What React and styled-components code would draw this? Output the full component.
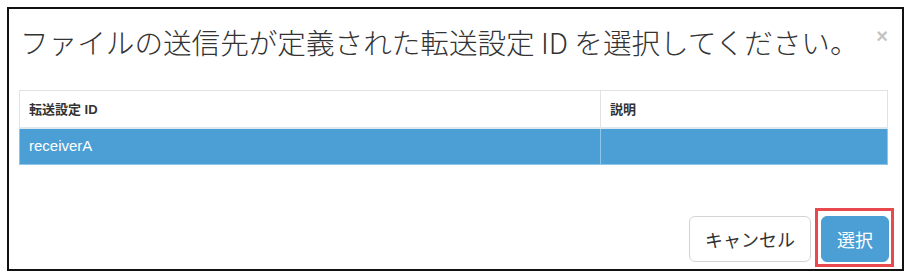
import React from "react";
import styled, { createGlobalStyle } from "styled-components";

const GlobalStyle = createGlobalStyle`
  html, body {
    margin: 0;
    padding: 0;
    background: #fff;
  }
  body {
    font-family: "Noto Sans CJK JP", "Noto Sans", "Liberation Sans", sans-serif;
    color: #333;
  }
`;

const rows = [{ id: "receiverA", description: "" }];

const App = () => {
  return (
    <>
      <GlobalStyle />
      <Frame>
        <Header>
          <Title>ファイルの送信先が定義された転送設定 ID を選択してください。</Title>
          <CloseButton aria-label="close">×</CloseButton>
        </Header>
        <Body>
          <Table>
            <colgroup>
              <col style={{ width: "581px" }} />
              <col />
            </colgroup>
            <thead>
              <tr>
                <Th>転送設定 ID</Th>
                <Th>説明</Th>
              </tr>
            </thead>
            <tbody>
              {rows.map((row) => (
                <Row key={row.id} selected>
                  <Td>{row.id}</Td>
                  <Td>{row.description}</Td>
                </Row>
              ))}
            </tbody>
          </Table>
        </Body>
        <Footer>
          <Button>キャンセル</Button>
          <Highlight>
            <Button primary>選択</Button>
          </Highlight>
        </Footer>
      </Frame>
    </>
  );
};

const Frame = styled.div`
  box-sizing: border-box;
  width: 897px;
  height: 264px;
  margin: 7px 0 0 7px;
  border: 2px solid #111;
  background: #fff;
  display: flex;
  flex-direction: column;
`;

const Header = styled.div`
  display: flex;
  justify-content: space-between;
  align-items: flex-start;
  padding: 16px 14px 0 11px;
  height: 81px;
  box-sizing: border-box;
`;

const Title = styled.h4`
  margin: 0;
  font-size: 28.6px;
  font-weight: 300;
  line-height: 34px;
  color: #333;
  white-space: nowrap;
`;

const CloseButton = styled.button`
  border: 0;
  background: none;
  padding: 0;
  margin-top: 1px;
  font-family: "Liberation Sans", sans-serif;
  font-size: 20px;
  line-height: 1;
  font-weight: 700;
  color: #c4c4c4;
  cursor: pointer;
`;

const Body = styled.div`
  padding: 0 14px 0 10px;
`;

const Table = styled.table`
  width: 100%;
  border-collapse: collapse;
  table-layout: fixed;
  font-family: "Liberation Sans", "Noto Sans CJK JP", sans-serif;
`;

const Th = styled.th`
  text-align: left;
  height: 37px;
  box-sizing: border-box;
  padding: 0 9px;
  font-size: 13px;
  font-weight: 700;
  color: #333;
  border: 1px solid #e2e2e2;
  border-bottom: 2px solid #dde8ef;
`;

const Row = styled.tr`
  background: ${(p) => (p.selected ? "#4b9fd5" : "#fff")};
  color: ${(p) => (p.selected ? "#fff" : "#333")};
`;

const Td = styled.td`
  height: 37px;
  box-sizing: border-box;
  padding: 0 9px 2px;
  font-size: 15px;
  border: 1px solid #8ec5ea;
  border-top: 0;
`;

const Footer = styled.div`
  margin-top: auto;
  display: flex;
  justify-content: flex-end;
  align-items: flex-end;
  gap: 4px;
  padding: 0 8px 2px 0;
`;

const Highlight = styled.span`
  display: inline-flex;
  border: 3px solid #e8494f;
  padding: 5px 2px 2px 3px;
`;

const Button = styled.button`
  box-sizing: border-box;
  height: 46px;
  padding: 0 15px;
  margin-bottom: ${(p) => (p.primary ? "0" : "5px")};
  font-family: "Noto Sans CJK JP", sans-serif;
  font-size: 18px;
  line-height: 1;
  border-radius: 6px;
  border: 1px solid ${(p) => (p.primary ? "#4b9fd5" : "#d4d4d4")};
  background: ${(p) => (p.primary ? "#4b9fd5" : "#fff")};
  color: ${(p) => (p.primary ? "#fff" : "#333")};
  cursor: pointer;
`;

export default App;
